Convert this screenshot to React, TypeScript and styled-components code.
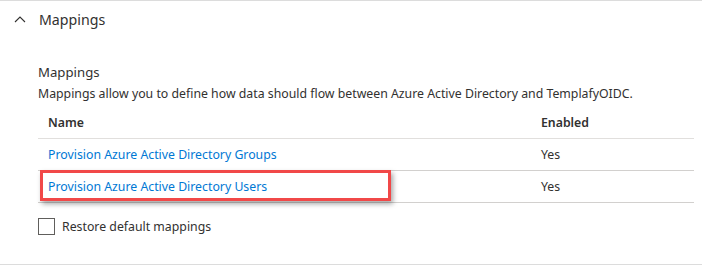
import React, { useState } from 'react';
import styled, { createGlobalStyle } from 'styled-components';

const GlobalStyle = createGlobalStyle`
  body {
    margin: 0;
    background: #fff;
    font-family: 'Segoe UI', 'Noto Sans', 'Open Sans', sans-serif;
    color: #323130;
  }
`;

type Mapping = { name: string; enabled: boolean; highlighted?: boolean };

const mappings: Mapping[] = [
  { name: 'Provision Azure Active Directory Groups', enabled: true },
  { name: 'Provision Azure Active Directory Users', enabled: true, highlighted: true },
];

const App = () => {
  const [open, setOpen] = useState(true);
  const [restore, setRestore] = useState(false);

  return (
    <>
      <GlobalStyle />
      <Section>
        <SectionHeader type="button" onClick={() => setOpen((p) => !p)}>
          <Chevron viewBox="0 0 12 8" $open={open}>
            <path d="M1 7 L6 2 L11 7" fill="none" stroke="#323130" strokeWidth="1.1" />
          </Chevron>
          <SectionTitle>Mappings</SectionTitle>
        </SectionHeader>
        {open ? (
          <Body>
            <Label>Mappings</Label>
            <Description>
              Mappings allow you to define how data should flow between Azure Active Directory and TemplafyOIDC.
            </Description>
            <Table>
              <HeadRow>
                <NameCell>Name</NameCell>
                <EnabledCell>Enabled</EnabledCell>
              </HeadRow>
              {mappings.map((m) => (
                <Row key={m.name}>
                  <NameCell>
                    <Link href="#" onClick={(e) => e.preventDefault()}>
                      {m.name}
                    </Link>
                    {m.highlighted ? <Highlight /> : null}
                  </NameCell>
                  <EnabledCell>{m.enabled ? 'Yes' : 'No'}</EnabledCell>
                </Row>
              ))}
            </Table>
            <CheckRow>
              <Box $checked={restore} onClick={() => setRestore((p) => !p)} />
              <CheckLabel>Restore default mappings</CheckLabel>
            </CheckRow>
          </Body>
        ) : null}
      </Section>
    </>
  );
};

export default App;

const Section = styled.div`
  width: 702px;
  height: 263px;
  border-top: 1px solid #dcdcdc;
  border-bottom: 1px solid #dcdcdc;
  box-sizing: content-box;
`;

const SectionHeader = styled.button`
  display: flex;
  align-items: center;
  height: 36px;
  padding: 0 0 0 14px;
  border: 0;
  background: none;
  cursor: pointer;
  font: inherit;
  color: inherit;
`;

const Chevron = styled.svg<{ $open: boolean }>`
  width: 12px;
  height: 8px;
  transform: ${(p) => (p.$open ? 'none' : 'rotate(180deg)')};
`;

const SectionTitle = styled.span`
  margin-left: 13px;
  font-size: 14.2px;
  color: #323130;
`;

const Body = styled.div`
  padding: 25px 8px 0 38px;
`;

const Label = styled.div`
  font-size: 13.2px;
  line-height: 20px;
`;

const Description = styled.div`
  font-size: 12.3px;
  line-height: 18px;
  margin-top: 3px;
`;

const Table = styled.div`
  display: flex;
  flex-direction: column;
  margin-top: 3px;
`;

const HeadRow = styled.div`
  display: grid;
  grid-template-columns: 493px 1fr;
  height: 32px;
  align-items: center;
  font-size: 12.3px;
  font-weight: 600;
  border-bottom: 1px solid #e1dfdd;
`;

const Row = styled(HeadRow)`
  font-weight: 400;
  height: 31px;
  border-bottom-color: #d2d0ce;
`;

const NameCell = styled.div`
  position: relative;
  padding-left: 10px;
  display: flex;
  align-items: center;
  height: 100%;
`;

const EnabledCell = styled.div`
  padding-left: 10px;
`;

const Link = styled.a`
  color: #0078d4;
  text-decoration: none;
  font-size: 12.3px;
`;

const Highlight = styled.span`
  position: absolute;
  left: 2px;
  top: -1px;
  width: 351px;
  height: 31px;
  border: 3px solid #f14848;
  box-sizing: border-box;
  box-shadow: 2px 3px 5px rgba(0, 0, 0, 0.35);
  pointer-events: none;
`;

const CheckRow = styled.div`
  display: flex;
  align-items: center;
  margin-top: 15px;
`;

const Box = styled.span<{ $checked: boolean }>`
  width: 15px;
  height: 15px;
  border: 1px solid #605e5c;
  background: ${(p) => (p.$checked ? '#0078d4' : '#fff')};
  cursor: pointer;
`;

const CheckLabel = styled.span`
  margin-left: 7px;
  font-size: 12.3px;
`;
